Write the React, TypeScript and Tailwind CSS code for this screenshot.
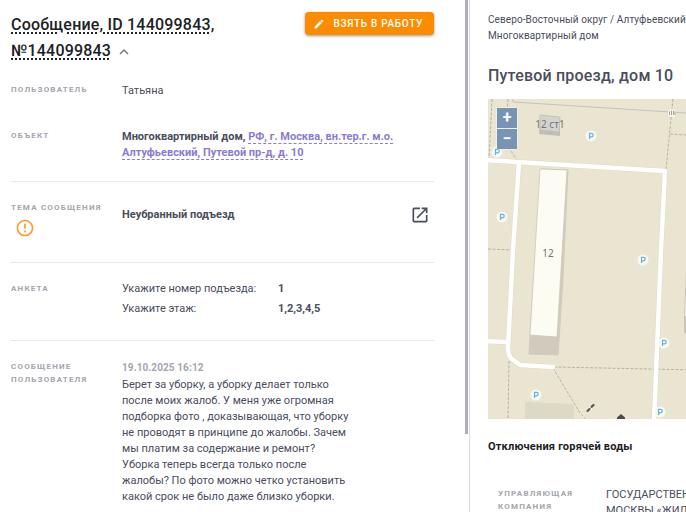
import type { ReactNode } from 'react'
import { MdEdit, MdErrorOutline, MdKeyboardArrowUp, MdOpenInNew } from 'react-icons/md'

const PARKINGS = [
  { x: 103, y: 37 },
  { x: 9, y: 53 },
  { x: 14, y: 118 },
  { x: 155, y: 161 },
  { x: 176, y: 244 },
  { x: 48, y: 296 },
  { x: 172, y: 313 },
]

const FOOTPATHS = [
  'M4 0 1 60',
  'M20 0 17 43 29 61',
  'M185 0 178 70',
  'M182 35 198 36 400 44',
  'M0 150 24 151',
  'M66 268 400 275',
  'M65 269 92 314 99 321',
  'M21 262 20 321',
]

const ROADS = [
  'M-4 61 177 72 173 151 166 324',
  'M31 63 25 151 20 248 Q20 257 24 260 L32 266 65 268',
  'M-4 242 20 243',
]

interface LabelProps {
  children: ReactNode
}

function Label({ children }: LabelProps) {
  return (
    <div className="text-[8px] leading-[13px] font-bold uppercase tracking-[1.2px] text-[#a3a5ad]">
      {children}
    </div>
  )
}

interface RowProps {
  label: ReactNode
  children: ReactNode
  className?: string
}

function Row({ label, children, className = '' }: RowProps) {
  return (
    <div className={`flex ${className}`}>
      <div className="w-[111px] shrink-0">{label}</div>
      <div className="min-w-0 flex-1">{children}</div>
    </div>
  )
}

function MapDrawing() {
  return (
    <svg width="400" height="320" viewBox="0 0 400 320" className="block max-w-none">
      <rect width="400" height="320" fill="#eae5d0" />
      <path d="M25 0V3L198 14 400 26" fill="none" stroke="#c5c1b5" />

      {/* Yard */}
      <path d="M37 320V306Q37 303 41 303L82 305Q86 305 86 309V320Z" fill="#dcd9c5" />

      {FOOTPATHS.map((d) => (
        <path key={d} d={d} fill="none" stroke="#b8b29f" strokeDasharray="3 1.5" />
      ))}

      {ROADS.map((d) => (
        <path key={d} d={d} fill="none" stroke="#dedac9" strokeWidth="5.5" strokeLinejoin="round" strokeLinecap="round" />
      ))}
      {ROADS.map((d) => (
        <path key={d} d={d} fill="none" stroke="#fff" strokeWidth="4.5" strokeLinejoin="round" strokeLinecap="round" />
      ))}

      {/* Buildings */}
      <path d="M53 70 80 71 75 180 70 256 41 255 42 236Z" fill="#d1cbbd" stroke="#d1cbbd" strokeLinejoin="round" />
      <path d="M52 70 79 71 69 238 42 236Z" fill="#fcfcf2" stroke="#c9c4b5" strokeWidth="0.7" strokeLinejoin="round" />
      <path d="M52 16 72 18 72 37 51 35Z" fill="#bfbdb8" />
      <path d="M52 16 72 18 71 33 52 31Z" fill="#d5d3d0" stroke="#bfbdb8" strokeWidth="0.7" />
      <path d="M198 171 196 217V234L210 236V171Z" fill="#cbc5b8" />
      <path d="M199 171 197 217 210 218V171Z" fill="#fcfcf2" />

      <g fill="#77756f" fontFamily="'Noto Sans', sans-serif" fontSize="10" textAnchor="middle">
        <text x="62" y="29">12 ст1</text>
        <text x="60" y="158">12</text>
      </g>

      {PARKINGS.map(({ x, y }) => (
        <g key={`${x}-${y}`} transform={`translate(${x} ${y})`}>
          <circle r="5.5" fill="#f8f7f1" />
          <path d="M-1.5 3V-2.7H0.5A1.7 1.7 0 0 1 0.5 0.8H-1.5" fill="none" stroke="#62b2e4" strokeWidth="1.2" />
        </g>
      ))}

      {/* Gate */}
      <circle cx="184" cy="14" r="4" fill="#f8f7f1" />
      <path d="M181.5 12.5V16M183.5 11.5V16M185.5 11.5V16M187 12.5V16" stroke="#8d8981" strokeWidth="0.8" />

      {/* Barrier and entrance */}
      <path d="M100 311.5 105 306.5" stroke="#f4f1e6" strokeWidth="4" strokeLinecap="round" />
      <path d="M100 311.5 105 306.5" stroke="#77736c" strokeWidth="1" />
      <path
        d="M99.5 312 101.2 310.3M103.8 307.7 105.5 306"
        stroke="#5e5b56"
        strokeWidth="2.4"
        strokeLinecap="round"
      />
      <path d="M133 315 137 318.5V320H129V318.5Z" fill="#4d4a45" />
    </svg>
  )
}

export default function App() {
  return (
    <div className="flex h-screen overflow-hidden bg-white font-['Roboto',sans-serif] text-[11px] leading-4 text-[#4a4d5c]">
      {/* Message details */}
      <main className="flex w-[470px] shrink-0 border-r border-[#dcdce0]">
        <div className="min-w-0 flex-1 pl-[11px] pr-[31px]">
          <header className="flex items-start justify-between pt-3">
            <h1 className="w-[220px] text-base leading-[26px] font-medium tracking-[0.2px] text-[#202124]">
              <span className="underline decoration-dotted decoration-2 underline-offset-2">
                Сообщение, ID 144099843
              </span>
              ,{' '}
              <span className="underline decoration-dotted decoration-2 underline-offset-2">№144099843</span>
              <button type="button" aria-label="Свернуть" className="ml-1 align-middle text-[#73757f]">
                <MdKeyboardArrowUp className="size-[18px]" />
              </button>
            </h1>
            <button
              type="button"
              className="flex h-[23px] items-center gap-2 rounded bg-[#fb8c00] pl-2 pr-[11px] text-[10px] font-medium uppercase tracking-[0.7px] whitespace-nowrap text-white shadow-[0_1px_3px_rgba(0,0,0,0.4)]"
            >
              <MdEdit className="size-3" />
              Взять в работу
            </button>
          </header>

          <Row className="mt-[19px]" label={<Label>Пользователь</Label>}>
            <p>Татьяна</p>
          </Row>

          <Row className="mt-[30px] border-b border-[#e9e9eb] pb-5" label={<Label>Объект</Label>}>
            <p className="font-bold">
              Многоквартирный дом,{' '}
              <a href="#building" className="border-b border-dashed border-[#8c7bd0] text-[#8c7bd0]">
                РФ, г. Москва, вн.тер.г. м.о. Алтуфьевский, Путевой пр-д, д. 10
              </a>
            </p>
          </Row>

          <Row
            className="border-b border-[#e9e9eb] pt-[19px] pb-6"
            label={
              <>
                <Label>Тема сообщения</Label>
                <MdErrorOutline className="mt-1 ml-1 size-5 text-[#fb9a2c]" />
              </>
            }
          >
            <div className="flex items-center justify-between pt-1 pr-1">
              <p className="font-bold">Неубранный подъезд</p>
              <a href="#topic" aria-label="Открыть тему">
                <MdOpenInNew className="size-5" />
              </a>
            </div>
          </Row>

          <Row className="border-b border-[#e9e9eb] pt-4 pb-[21px]" label={<div className="pt-[3px]"><Label>Анкета</Label></div>}>
            <dl className="grid grid-cols-[156px_1fr] leading-5">
              <dt>Укажите номер подъезда:</dt>
              <dd className="font-bold">1</dd>
              <dt>Укажите этаж:</dt>
              <dd className="font-bold">1,2,3,4,5</dd>
            </dl>
          </Row>

          <Row className="pt-[19px]" label={<Label>Сообщение пользователя</Label>}>
            <time className="mb-px block text-[10px] font-bold tracking-[0.1px] text-[#a3a5ad]">19.10.2025 16:12</time>
            <p className="w-[230px]">
              Берет за уборку, а уборку делает только после моих жалоб. У меня уже огромная подборка фото ,
              доказывающая, что уборку не проводят в принципе до жалобы. Зачем мы платим за содержание и
              ремонт? Уборка теперь всегда только после жалобы? По фото можно четко установить какой срок не
              было даже близко уборки.
            </p>
          </Row>
        </div>
        {/* Scrollbar thumb */}
        <div className="mr-px h-[434px] w-[3px] bg-[#aeaeb5]" />
      </main>

      {/* Building card */}
      <aside className="min-w-0 flex-1 overflow-hidden pt-3 pl-[18px]">
        <p className="text-[10px] tracking-[0.1px] whitespace-nowrap">
          Северо-Восточный округ / Алтуфьевский
          <br />
          Многоквартирный дом
        </p>
        <h2 className="mt-5 text-base leading-6 font-medium tracking-[0.2px] whitespace-nowrap">Путевой проезд, дом 10</h2>

        <div className="relative mt-[11px] h-80 overflow-hidden bg-[#eae5d0]">
          <MapDrawing />
          <div className="absolute top-2 left-2 flex flex-col gap-px rounded-sm bg-white/40 p-px text-base leading-none font-bold text-white">
            <button type="button" aria-label="Приблизить" className="h-5 w-5 bg-[#7894b5]">
              +
            </button>
            <button type="button" aria-label="Отдалить" className="h-5 w-5 bg-[#7894b5]">
              −
            </button>
          </div>
        </div>

        <h3 className="mt-5 font-bold tracking-[0.2px] text-[#202124]">Отключения горячей воды</h3>

        <div className="mt-8 flex pl-[10px]">
          <div className="w-[108px] shrink-0">
            <Label>Управляющая компания</Label>
          </div>
          <p className="whitespace-nowrap">
            ГОСУДАРСТВЕННОЕ БЮДЖЕТНОЕ
            <br />
            МОСКВЫ «ЖИЛИЩНИК»
          </p>
        </div>
      </aside>
    </div>
  )
}
